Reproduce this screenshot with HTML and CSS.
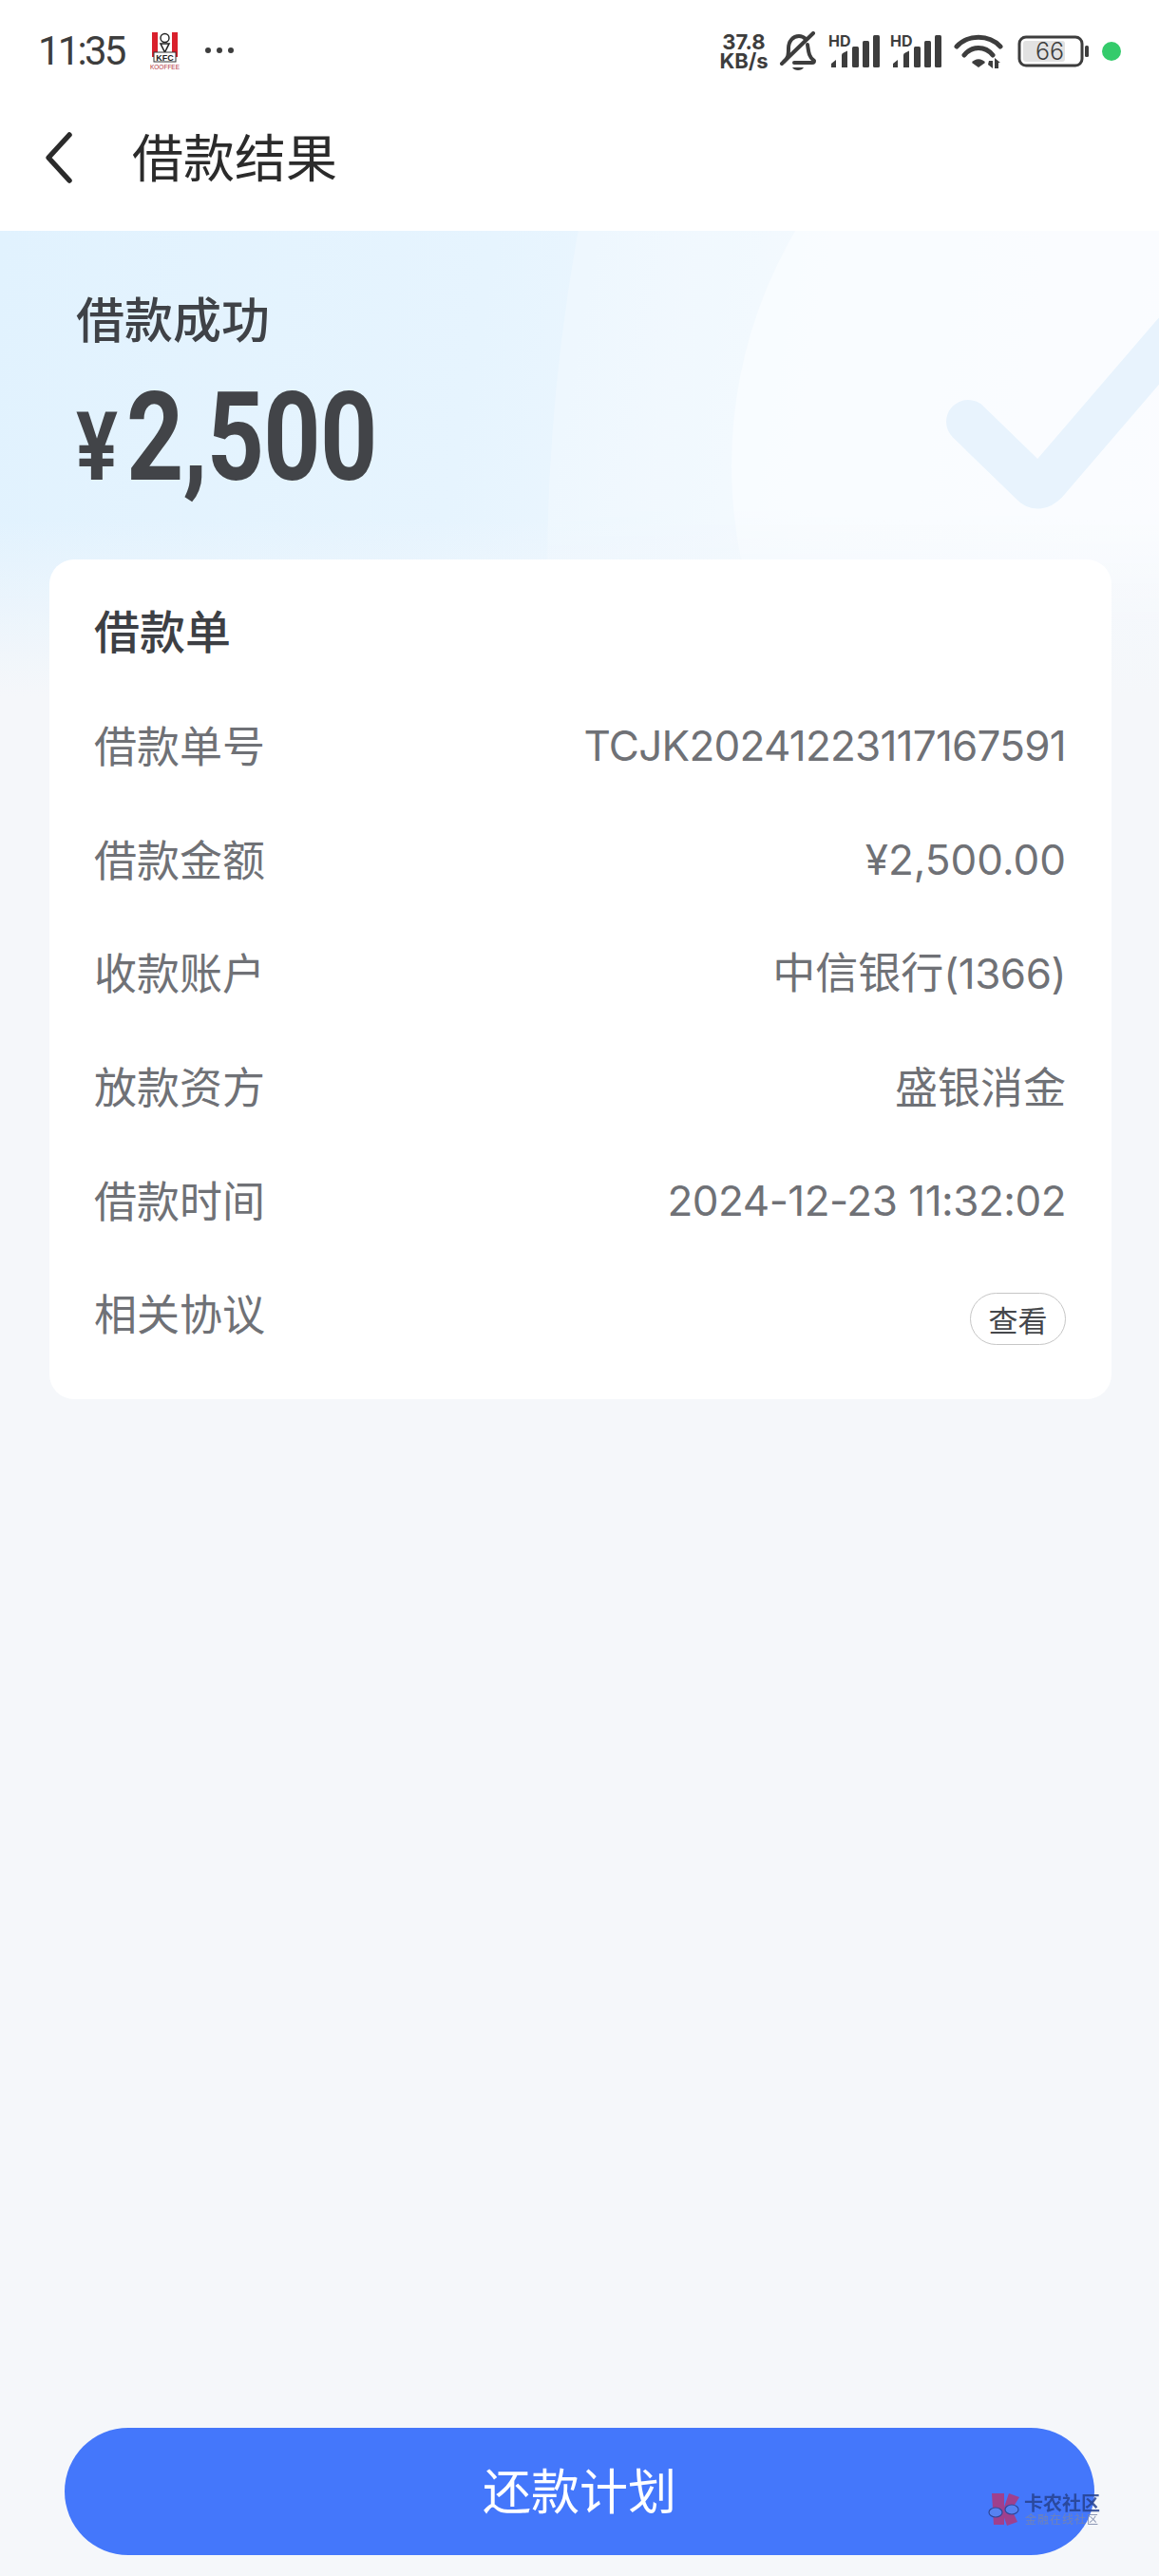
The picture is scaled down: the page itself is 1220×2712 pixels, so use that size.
FILE: index.html
```html
<!DOCTYPE html>
<html lang="zh-CN">
<head>
<meta charset="utf-8">
<title>借款结果</title>
<link rel="stylesheet" href="styles.css">
</head>
<body>
<div class="page">
  <header class="top">
    <div class="status">
      <div class="status-left">
        <span class="clock">11:35</span>
        <svg class="kfc" viewBox="0 0 32 40" width="32" height="40">
          <rect x="2" y="1" width="27" height="26" fill="#d9202c"/>
          <rect x="8" y="1" width="15" height="26" fill="#fff"/>
          <circle cx="15.500" cy="7" r="4.500" fill="#fff" stroke="#222" stroke-width="1.400"/>
          <path d="M11 13 L15.500 22 L20 13 Z" fill="#fff" stroke="#222" stroke-width="1.600"/>
          <rect x="4" y="22" width="23" height="10" fill="#fff" stroke="#333" stroke-width="1"/>
          <text x="15.500" y="30.500" class="kfc-a" text-anchor="middle">KFC</text>
          <text x="15.500" y="39.500" class="kfc-b" text-anchor="middle">KOOFFEE</text>
        </svg>
        <svg class="dots" viewBox="0 0 34 8" width="34" height="8"><circle cx="5" cy="4" r="3" /><circle cx="17" cy="4" r="3"/><circle cx="29" cy="4" r="3"/></svg>
      </div>
      <div class="status-right">
        <div class="speed"><span>37.8</span><span>KB/s</span></div>
        <svg class="ico bell" viewBox="0 0 40 42" width="40" height="42">
          <path d="M5 32 C10 28 10 24 10 18 C10 10 15 5 21 5 C24 5 26 6 28 8 M30 14 C31 20 31 27 37 31 C37 33 36 33 35 33 H16" fill="none" stroke="#3d3d3d" stroke-width="4" stroke-linecap="round" stroke-linejoin="round"/>
          <path d="M3 34 L36 2" stroke="#3d3d3d" stroke-width="4" stroke-linecap="round"/>
          <path d="M14 38 H26 C24 42 16 42 14 38 Z" fill="#3d3d3d"/>
        </svg>
        <div class="sig">
          <svg viewBox="0 0 56 36" width="56" height="36">
            <text x="0" y="13" class="hd">HD</text>
            <path d="M3 35 V31 L8 27 V35 Z M14 35 V22 Q14 20 16 19.500 L20 17.500 V35 Z" fill="#3d3d3d"/>
            <rect x="25" y="13" width="7" height="22" rx="1.500" fill="#3d3d3d"/>
            <rect x="36" y="7" width="7" height="28" rx="1.500" fill="#3d3d3d"/>
            <rect x="47" y="1" width="7" height="34" rx="1.500" fill="#3d3d3d"/>
          </svg>
        </div>
        <div class="sig">
          <svg viewBox="0 0 56 36" width="56" height="36">
            <text x="0" y="13" class="hd">HD</text>
            <path d="M3 35 V31 L8 27 V35 Z M14 35 V22 Q14 20 16 19.500 L20 17.500 V35 Z" fill="#3d3d3d"/>
            <rect x="25" y="13" width="7" height="22" rx="1.500" fill="#3d3d3d"/>
            <rect x="36" y="7" width="7" height="28" rx="1.500" fill="#3d3d3d"/>
            <rect x="47" y="1" width="7" height="34" rx="1.500" fill="#3d3d3d"/>
          </svg>
        </div>
        <svg class="ico wifi" viewBox="0 0 52 36" width="52" height="36">
          <path d="M3 13 C15 0 37 0 49 13" fill="none" stroke="#3d3d3d" stroke-width="5" stroke-linecap="round"/>
          <path d="M11 22 C19 12 33 12 41 22" fill="none" stroke="#3d3d3d" stroke-width="5" stroke-linecap="round"/>
          <path d="M19 30 C22 25 30 25 33 30 L26 35 Z" fill="#3d3d3d"/>
          <path d="M37 28 L41 28 V36 L36 32 Z M43 25 L49 30 H47 V36 H43 Z" fill="#3d3d3d"/>
        </svg>
        <svg class="ico batt" viewBox="0 0 76 34" width="76" height="34">
          <rect x="2" y="2" width="66" height="30" rx="7" fill="none" stroke="#3d3d3d" stroke-width="3"/>
          <rect x="6" y="6" width="44" height="22" rx="3" fill="#e2e2e2"/>
          <rect x="71" y="11" width="4" height="12" rx="1.500" fill="#3d3d3d"/>
          <text x="34" y="26" class="batt-num" text-anchor="middle">66</text>
        </svg>
        <span class="dot"></span>
      </div>
    </div>
    <nav class="nav">
      <svg class="back" viewBox="0 0 32 56" width="32" height="56"><path d="M27 4 L5 28 L27 52" fill="none" stroke="#2b2b2b" stroke-width="5.500" stroke-linecap="round" stroke-linejoin="round"/></svg>
      <h1 class="nav-title">借款结果</h1>
    </nav>
  </header>

  <main class="main">
    <div class="backdrop">
      <div class="shapes">
        <span class="ring ring-a"></span>
        <span class="ring ring-b"></span>
        <svg class="tick" viewBox="0 0 240 240" width="240" height="240"><path d="M24 118 L92 184 Q98 190 106 182 L240 26" fill="none" stroke="#e8f3fd" stroke-width="46" stroke-linecap="round" stroke-linejoin="round"/></svg>
      </div>
    </div>
    <section class="hero">
      <h2 class="hero-title">借款成功</h2>
      <div class="amount"><span class="yen">¥</span><span class="num">2,500</span></div>
    </section>
    <section class="card">
      <h3 class="card-title">借款单</h3>
      <div class="row"><span class="label">借款单号</span><span class="val val-id">TCJK20241223117167591</span></div>
      <div class="row"><span class="label">借款金额</span><span class="val val-money">¥2,500.00</span></div>
      <div class="row"><span class="label">收款账户</span><span class="val val-cjk">中信银行<span class="val">(1366)</span></span></div>
      <div class="row"><span class="label">放款资方</span><span class="val val-cjk">盛银消金</span></div>
      <div class="row"><span class="label">借款时间</span><span class="val">2024-12-23 11:32:02</span></div>
      <div class="row"><span class="label">相关协议</span><span class="pill">查看</span></div>
    </section>
    <footer class="foot">
      <button class="cta">还款计划</button>
      <div class="mark">
        <svg viewBox="0 0 33 34" width="33" height="34">
          <path d="M4 0 H17 V33 H6 Z" fill="#b0377a"/>
          <path d="M22 0 L33 4 L25 17 L31 30 L20 34 L15 20 Z" fill="#b0377a"/>
          <ellipse cx="8" cy="20" rx="7" ry="5" fill="#5a85f0" stroke="#2c3f86" stroke-width="1.200"/>
          <ellipse cx="25" cy="17" rx="7" ry="5" fill="#5a85f0" stroke="#2c3f86" stroke-width="1.200"/>
        </svg>
        <div class="mark-text"><span class="mark-a">卡农社区</span><span class="mark-b">金融在线社区</span></div>
      </div>
    </footer>
  </main>
</div>
</body>
</html>
```

FILE: styles.css
```css
* { box-sizing: border-box; }
html, body { margin: 0; padding: 0; }
body {
  width: 1220px;
  height: 2712px;
  overflow: hidden;
  background: #f5f7fa;
  font-family: "Inter", "Noto Sans CJK SC", sans-serif;
  color: #3d3f44;
}
h1, h2, h3 { margin: 0; }
.page { display: flex; flex-direction: column; height: 2712px; }

.top { background: #fff; height: 243px; flex: none; }
.status {
  height: 108px;
  padding: 0 39px 0 40px;
  display: flex;
  align-items: center;
  justify-content: space-between;
}
.status-left { display: flex; align-items: center; }
.clock { font: 400 42px/1 "Roboto", sans-serif; color: #3d3d3d; width: 118px; letter-spacing: -2.800px; }
.kfc { display: block; margin-bottom: 2px; }
.kfc-a { font: 700 9px "Liberation Sans", sans-serif; fill: #222; }
.kfc-b { font: 400 6.500px "Liberation Sans", sans-serif; fill: #b3323a; }
.dots { margin-left: 24px; fill: #3d3d3d; margin-bottom: 2px; }
.status-right { display: flex; align-items: center; margin-right: 1px; }
.speed {
  display: flex; flex-direction: column; align-items: center;
  font: 700 22px/20px "Inter", sans-serif; color: #3d3d3d; width: 54px;
}
.ico { display: block; }
.bell { margin-left: 10px; }
.sig { margin-left: 12px; width: 56px; }
.sig svg { display: block; overflow: visible; }
.sig + .sig { margin-left: 9px; }
.hd { font: 700 16px "Inter", sans-serif; fill: #3d3d3d; }
.wifi { margin-left: 11px; }
.batt { margin-left: 15px; }
.batt-num { font: 300 25px "Inter", sans-serif; fill: #3d3d3d; }
.dot { width: 20px; height: 20px; border-radius: 50%; background: #34cb6b; margin-left: 13px; }

.nav { height: 115px; display: flex; align-items: center; padding-left: 46px; }
.back { display: block; }
.nav-title {
  margin: 0 0 4px 61px;
  font: 400 54px/1 "Noto Sans CJK SC", sans-serif;
  color: #2b2b2b;
}

.main { flex: 1; position: relative; display: flex; flex-direction: column; }
.backdrop {
  position: absolute; left: 0; top: 0; right: 0; height: 490px; overflow: hidden;
  background:
    linear-gradient(to bottom, rgba(245,247,250,0) 62%, #f5f7fa 100%),
    linear-gradient(100deg, #e1f2fe 0%, #e6f4fe 40%, #f1f8fe 70%, #f5f9fe 100%);
}
.shapes {
  position: absolute; inset: 0;
  -webkit-mask-image: linear-gradient(to bottom, #000 60%, transparent 88%);
  mask-image: linear-gradient(to bottom, #000 60%, transparent 88%);
}
.ring { position: absolute; border-radius: 50%; }
.ring-a { left: 576px; top: -1640px; width: 4000px; height: 4000px; background: rgba(255,255,255,.25); }
.ring-b { left: 770px; top: -241px; width: 976px; height: 976px; background: rgba(255,255,255,.42); }
.tick { position: absolute; left: 995px; top: 83px; }

.hero { position: relative; height: 346px; padding: 63px 0 0 80px; }
.hero-title { font: 500 51px/56px "Noto Sans CJK SC", sans-serif; color: #3f4247; }
.amount { display: flex; align-items: baseline; margin-top: 39px; color: #424448; line-height: 1; }
.yen { font: 700 100px/120px "Roboto", sans-serif; width: 53px; display: block; transform: scaleX(.82); transform-origin: left; }
.num { font: 700 130px/120px "Roboto", sans-serif; display: block; transform: scaleX(.81); transform-origin: left; letter-spacing: -1px; }

.card {
  position: relative;
  margin: 0 50px 0 52px;
  height: 884px;
  background: #fff;
  border-radius: 26px;
  padding: 43px 48px 0 47px;
}
.card-title { font: 500 48px/60px "Noto Sans CJK SC", sans-serif; color: #3d3f44; height: 91px; }
.row {
  height: 119.600px;
  padding-top: 2px;
  display: flex;
  justify-content: space-between;
  align-items: center;
  font: 400 44px/1 "Inter", "Noto Sans CJK SC", sans-serif;
  color: #6f7176;
}
.label { font: 400 45px/1 "Noto Sans CJK SC", sans-serif; }
.val { font: 400 44px/1 "Inter", "Noto Sans CJK SC", sans-serif; letter-spacing: -.500px; padding-top: 3px; }
.val-id { letter-spacing: -.750px; }
.val-money { letter-spacing: 0; }
.val-cjk { font: 400 45px/1 "Noto Sans CJK SC", sans-serif; letter-spacing: 0; padding-top: 0; }
.pill {
  width: 101px; height: 55px;
  border: 1.500px solid #c6c6c6;
  border-radius: 28px;
  margin-top: 14px;
  display: flex; align-items: center; justify-content: center;
  font: 400 31px/1 "Noto Sans CJK SC", sans-serif;
  color: #45474b;
}

.foot { margin-top: auto; padding: 0 68px 22px; position: relative; }
.cta {
  display: block;
  width: 100%;
  height: 134px;
  border: 0;
  border-radius: 67px;
  padding: 0 0 5px;
  background: #4477fb;
  color: #fff;
  font: 400 51px/1 "Noto Sans CJK SC", sans-serif;
}
.mark {
  position: absolute; left: 1040px; bottom: 53px;
  display: flex; align-items: center; gap: 5px; opacity: .85;
}
.mark svg { display: block; }
.mark-text { display: flex; flex-direction: column; align-items: center; }
.mark-a { font: 700 20px/21px "Noto Sans CJK SC", sans-serif; color: #26418e; white-space: nowrap; }
.mark-b { font: 400 12px/14px "Noto Sans CJK SC", sans-serif; color: #7a86a8; letter-spacing: 1px; white-space: nowrap; }
```
